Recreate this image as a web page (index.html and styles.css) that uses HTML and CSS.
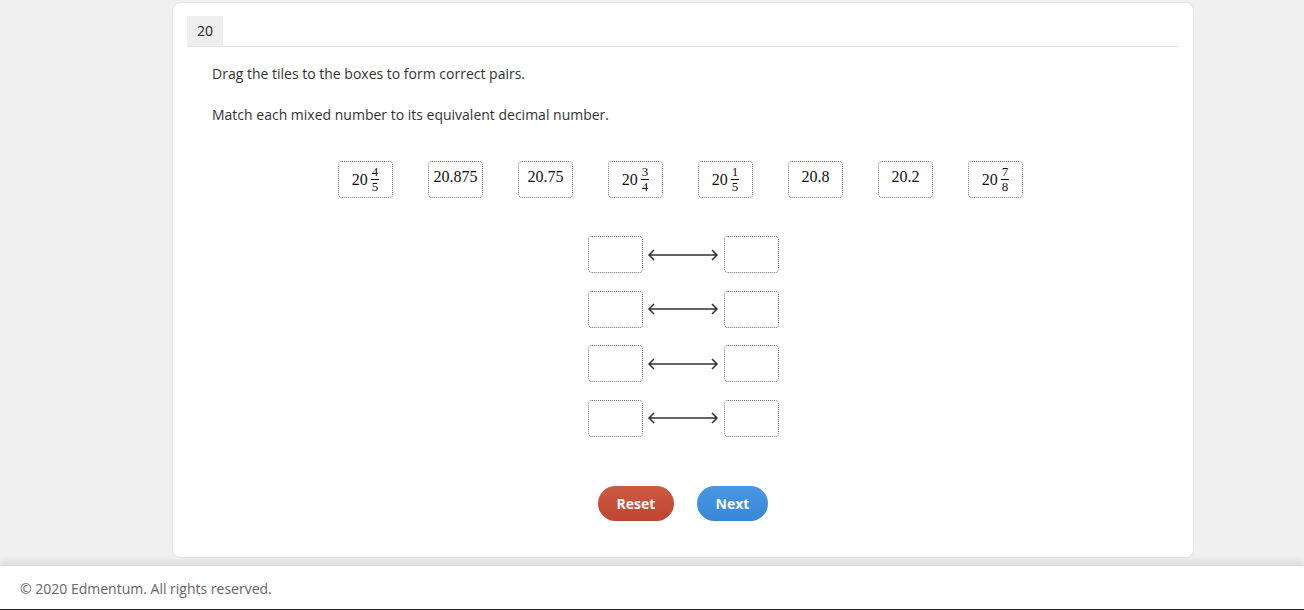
FILE: index.html
```html
<!DOCTYPE html>
<html>
<head>
<meta charset="utf-8">
<link rel="stylesheet" href="styles.css">
</head>
<body>
<div class="page">
  <div class="card">
    <div class="card-head"><span class="qnum">20</span></div>
    <div class="content">
      <p class="prompt">Drag the tiles to the boxes to form correct pairs.</p>
      <p class="prompt second">Match each mixed number to its equivalent decimal number.</p>
      <div class="tiles">
        <div class="tile"><span class="whole">20</span><span class="frac"><span class="num">4</span><span class="den">5</span></span></div>
        <div class="tile dec">20.875</div>
        <div class="tile dec">20.75</div>
        <div class="tile"><span class="whole">20</span><span class="frac"><span class="num">3</span><span class="den">4</span></span></div>
        <div class="tile"><span class="whole">20</span><span class="frac"><span class="num">1</span><span class="den">5</span></span></div>
        <div class="tile dec">20.8</div>
        <div class="tile dec">20.2</div>
        <div class="tile"><span class="whole">20</span><span class="frac"><span class="num">7</span><span class="den">8</span></span></div>
      </div>
      <div class="pairs">
        <div class="pair"><div class="drop"></div><svg class="arrow" width="81" height="14" viewBox="0 0 81 14"><path d="M6 7H74M11 2L6 7L11 12M69 2L74 7L69 12" fill="none" stroke="#333" stroke-width="1.5"/></svg><div class="drop"></div></div>
        <div class="pair"><div class="drop"></div><svg class="arrow" width="81" height="14" viewBox="0 0 81 14"><path d="M6 7H74M11 2L6 7L11 12M69 2L74 7L69 12" fill="none" stroke="#333" stroke-width="1.5"/></svg><div class="drop"></div></div>
        <div class="pair"><div class="drop"></div><svg class="arrow" width="81" height="14" viewBox="0 0 81 14"><path d="M6 7H74M11 2L6 7L11 12M69 2L74 7L69 12" fill="none" stroke="#333" stroke-width="1.5"/></svg><div class="drop"></div></div>
        <div class="pair"><div class="drop"></div><svg class="arrow" width="81" height="14" viewBox="0 0 81 14"><path d="M6 7H74M11 2L6 7L11 12M69 2L74 7L69 12" fill="none" stroke="#333" stroke-width="1.5"/></svg><div class="drop"></div></div>
      </div>
      <div class="actions">
        <button class="btn reset">Reset</button>
        <button class="btn next">Next</button>
      </div>
    </div>
  </div>
</div>
<footer class="footer">© 2020 Edmentum. All rights reserved.</footer>
</body>
</html>
```
FILE: styles.css
```css
html, body {
  margin: 0;
  padding: 0;
}
body {
  background: #f0f0f0;
  font-family: "Open Sans", "Liberation Sans", sans-serif;
  color: #333;
  width: 1304px;
  height: 610px;
  overflow: hidden;
}
.page {
  height: 565px;
  padding-top: 2px;
  box-sizing: border-box;
}
.card {
  margin-left: 172px;
  width: 1022px;
  height: 556px;
  box-sizing: border-box;
  background: #fff;
  border: 1px solid #e4e4e4;
  border-radius: 8px;
  padding: 13px 15px 0 14px;
}
.card-head {
  border-bottom: 1px solid #e2e2e2;
  height: 30px;
  display: flex;
}
.qnum {
  display: block;
  width: 36px;
  height: 30px;
  background: #eeeeee;
  font-size: 14px;
  line-height: 30px;
  text-align: center;
  color: #222;
}
.content {
  padding-left: 25px;
}
.prompt {
  margin: 17px 0 0 0;
  font-size: 14px;
  line-height: 20px;
  color: #333;
}
.prompt.second {
  margin-top: 21px;
}
.tiles {
  display: flex;
  gap: 35px;
  margin-top: 36px;
  padding-left: 126px;
}
.tile {
  width: 55px;
  height: 37px;
  box-sizing: border-box;
  border: 1px dotted #777;
  border-radius: 4px;
  display: flex;
  align-items: center;
  justify-content: center;
  font-family: "Liberation Serif", "DejaVu Serif", serif;
  font-size: 16px;
  color: #111;
}
.tile.dec {
  align-items: flex-start;
  padding-top: 6px;
}
.whole {
  margin-right: 3px;
}
.frac {
  display: inline-flex;
  flex-direction: column;
  align-items: center;
  font-size: 13px;
  line-height: 12px;
}
.num {
  border-bottom: 1px solid #111;
  padding: 0 1px 1px;
}
.den {
  padding-top: 1px;
}
.pairs {
  display: flex;
  flex-direction: column;
  gap: 17.5px;
  margin-top: 38px;
  padding-left: 376px;
}
.pair {
  display: flex;
  align-items: center;
}
.drop {
  width: 55px;
  height: 37px;
  box-sizing: border-box;
  border: 1px dotted #777;
  border-radius: 4px;
}
.arrow {
  display: block;
}
.actions {
  display: flex;
  gap: 23px;
  margin-top: 49px;
  padding-left: 386px;
}
.btn {
  height: 35px;
  border: none;
  border-radius: 18px;
  color: #fff;
  font-family: "Open Sans", "Liberation Sans", sans-serif;
  font-weight: bold;
  font-size: 14px;
  padding: 0;
}
.reset {
  width: 76px;
  background: linear-gradient(#cf5a44, #bd4531);
}
.next {
  width: 71px;
  background: linear-gradient(#4a98e2, #3786d6);
}
.footer {
  height: 45px;
  box-sizing: border-box;
  background: #fff;
  box-shadow: 0 -5px 6px rgba(0, 0, 0, 0.07);
  border-top: 1px solid #dcdcdc;
  border-bottom: 1px solid #222;
  padding-left: 20px;
  font-size: 14px;
  line-height: 45px;
  color: #666;
}
```
